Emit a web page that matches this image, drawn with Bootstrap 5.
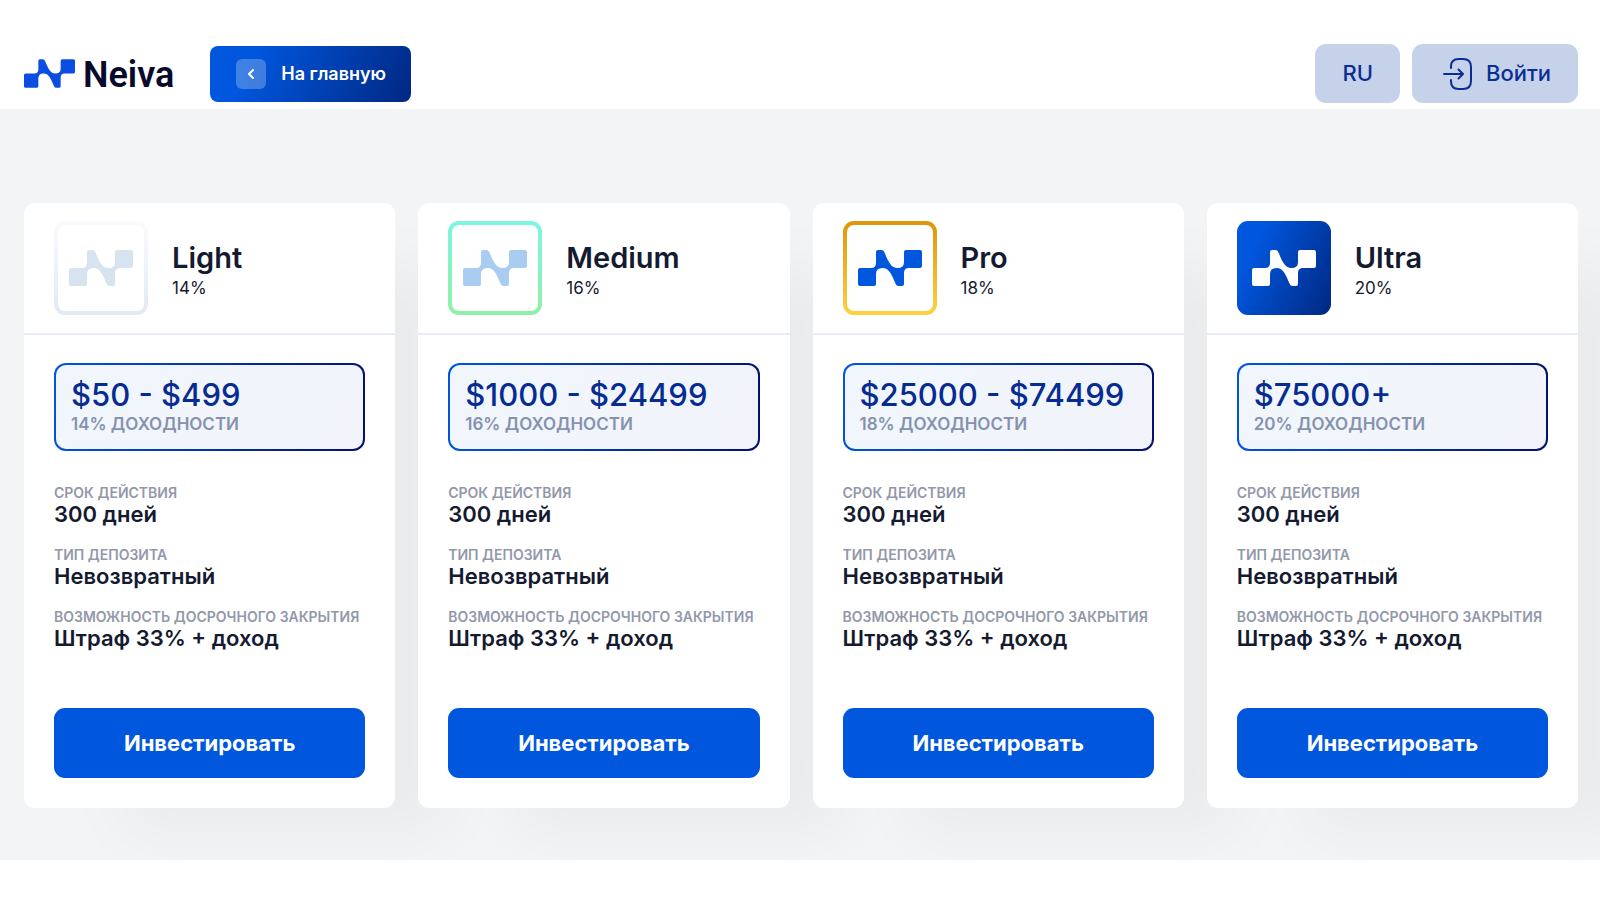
<!DOCTYPE html>
<html lang="ru">
<head>
<meta charset="utf-8">
<meta name="viewport" content="width=device-width, initial-scale=1">
<title>Neiva</title>
<link href="https://cdn.jsdelivr.net/npm/bootstrap@5.3.0/dist/css/bootstrap.min.css" rel="stylesheet">
<style>
:root{--brand:#0057de;--deep:#012a87;--ink:#141a30;--grad:linear-gradient(115deg,#0057de 20%,#012a87 96%)}
body{font-family:Inter,"Liberation Sans",sans-serif;color:var(--ink);background:#fff}
.top-bar{padding:44px 22px 6px 24px}
.brand-link{color:#080a2c;font:600 36px/36px Roboto,sans-serif;gap:8px;margin-right:36px}
.brand-link span{padding-top:2px}
.brand-link svg{width:51px;height:29px;color:#0b4de0}
.btn-home{height:56px;padding:0 25px 0 26px;gap:15px;border:0;border-radius:8px;background:var(--grad);color:#fff;font-size:18px;font-weight:600}
.btn-home:hover{color:#fff}
.home-chip{width:30px;height:30px;border-radius:6px;background:rgba(255,255,255,.25)}
.top-actions{gap:12px}
.btn-soft{height:59px;border:0;border-radius:11px;background:#c5d2ea;color:#0a2f94;font-size:22px;font-weight:500;padding:0 27px}
.btn-login{padding:0 27px 0 30px;gap:12px}
.plans{background:#f3f4f6;padding:94px 22px 52px 24px;overflow:hidden}
.plan-row{--bs-gutter-x:23px;--bs-gutter-y:23px}
.plan{border:0;border-radius:11px;box-shadow:76px 44px 60px -20px rgba(0,0,0,.04)}
.plan-head{padding:18px 30px;gap:24px;border-bottom:2px solid #e8ecf8}
.plan-icon{width:94px;height:94px;border-radius:11px;border:4px solid transparent}
.plan-icon svg{width:64px;height:36px}
.tier-light{color:#d7e3ef;background:linear-gradient(#fff,#fff) padding-box,linear-gradient(#fafbfe,#e2e9f5) border-box}
.tier-medium{color:#a9cdf0;background:linear-gradient(#fff,#fff) padding-box,linear-gradient(#7df5e2,#8ff0a6) border-box}
.tier-pro{color:var(--brand);background:linear-gradient(#fff,#fff) padding-box,linear-gradient(#df950c,#fbd243) border-box}
.tier-ultra{color:#fff;background:var(--grad) border-box}
.plan-title{padding-top:4px}
.plan-name{font-size:29px;line-height:36px;font-weight:600}
.plan-rate{font-size:17px;line-height:24px}
.plan-body{padding:28px 30px 30px}
.range-box{height:88px;padding:0 15px;border:2px solid transparent;border-radius:12px;background:linear-gradient(115deg,#f1f6fd,#f2f3fa) padding-box,linear-gradient(100deg,#0057de,#03106f) border-box}
.range-sum{font-size:31px;line-height:34px;font-weight:500;color:#062c92}
.range-note{font-size:17px;line-height:24px;font-weight:600;color:#8592ae}
.facts{margin:33px 0 58px;gap:20px}
.facts dt{font-size:14px;line-height:18px;font-weight:600;color:#9298aa;white-space:nowrap}
.facts dd{font-size:22px;line-height:24px;font-weight:600}
.btn-invest{height:70px;border:0;border-radius:11px;background:var(--brand);color:#fff;font-size:22px;font-weight:700}
.btn-invest:hover{background:var(--deep);color:#fff}
</style>
</head>
<body>
<svg class="d-none" aria-hidden="true">
<symbol id="mark-n" viewBox="0 0 64 36"><path fill="currentColor" d="M2 18H13Q18 18 18 13V2Q18 0 20 0H23.500Q25.500 0 26.300 2C30.500 12 33 18 39.500 18Q46 18 46 12V2Q46 0 48 0H62Q64 0 64 2V16Q64 18 62 18H51Q46 18 46 23V34Q46 36 44 36H40.500Q38.500 36 37.700 34C33.500 24 31 18 24.500 18Q18 18 18 24V34Q18 36 16 36H2Q0 36 0 34V20Q0 18 2 18Z"/></symbol>
</svg>
<header class="top-bar d-flex flex-wrap align-items-center">
  <a class="brand-link d-flex align-items-center text-decoration-none" href="#"><svg aria-hidden="true"><use href="#mark-n"/></svg><span>Neiva</span></a>
  <a class="btn btn-home d-inline-flex align-items-center" href="#">
    <span class="home-chip d-flex align-items-center justify-content-center"><svg width="8" height="12" viewBox="0 0 8 12" fill="none" stroke="#fff" stroke-width="2" stroke-linecap="round" stroke-linejoin="round" aria-hidden="true"><path d="M6 2 2 6l4 4"/></svg></span>
    На главную
  </a>
  <div class="top-actions d-flex ms-auto">
    <button class="btn btn-soft" type="button">RU</button>
    <button class="btn btn-soft btn-login d-inline-flex align-items-center" type="button">
      <svg width="32" height="34" viewBox="0 0 32 34" fill="none" stroke="#0a2f94" stroke-width="2" stroke-linecap="round" stroke-linejoin="round" aria-hidden="true"><path d="M9 11V9.500Q9 2 16.500 2H21Q29 2 29 10V24Q29 32 21 32H16.500Q9 32 9 24.500V23M2 17H21M16.500 12.500 21 17l-4.500 4.500"/></svg>
      Войти
    </button>
  </div>
</header>
<main class="plans">
  <div class="row row-cols-1 row-cols-md-2 row-cols-xl-4 plan-row">
    <div class="col"><article class="card plan">
      <div class="plan-head d-flex align-items-center">
        <div class="plan-icon tier-light d-flex align-items-center justify-content-center"><svg aria-hidden="true"><use href="#mark-n"/></svg></div>
        <div class="plan-title"><h2 class="plan-name m-0">Light</h2><div class="plan-rate">14%</div></div>
      </div>
      <div class="plan-body">
        <div class="range-box d-flex flex-column justify-content-center"><div class="range-sum">$50 - $499</div><div class="range-note">14% ДОХОДНОСТИ</div></div>
        <dl class="facts d-flex flex-column">
          <div><dt>СРОК ДЕЙСТВИЯ</dt><dd class="m-0">300 дней</dd></div>
          <div><dt>ТИП ДЕПОЗИТА</dt><dd class="m-0">Невозвратный</dd></div>
          <div><dt>ВОЗМОЖНОСТЬ ДОСРОЧНОГО ЗАКРЫТИЯ</dt><dd class="m-0">Штраф 33% + доход</dd></div>
        </dl>
        <button class="btn btn-invest w-100" type="button">Инвестировать</button>
      </div>
    </article></div>
    <div class="col"><article class="card plan">
      <div class="plan-head d-flex align-items-center">
        <div class="plan-icon tier-medium d-flex align-items-center justify-content-center"><svg aria-hidden="true"><use href="#mark-n"/></svg></div>
        <div class="plan-title"><h2 class="plan-name m-0">Medium</h2><div class="plan-rate">16%</div></div>
      </div>
      <div class="plan-body">
        <div class="range-box d-flex flex-column justify-content-center"><div class="range-sum">$1000 - $24499</div><div class="range-note">16% ДОХОДНОСТИ</div></div>
        <dl class="facts d-flex flex-column">
          <div><dt>СРОК ДЕЙСТВИЯ</dt><dd class="m-0">300 дней</dd></div>
          <div><dt>ТИП ДЕПОЗИТА</dt><dd class="m-0">Невозвратный</dd></div>
          <div><dt>ВОЗМОЖНОСТЬ ДОСРОЧНОГО ЗАКРЫТИЯ</dt><dd class="m-0">Штраф 33% + доход</dd></div>
        </dl>
        <button class="btn btn-invest w-100" type="button">Инвестировать</button>
      </div>
    </article></div>
    <div class="col"><article class="card plan">
      <div class="plan-head d-flex align-items-center">
        <div class="plan-icon tier-pro d-flex align-items-center justify-content-center"><svg aria-hidden="true"><use href="#mark-n"/></svg></div>
        <div class="plan-title"><h2 class="plan-name m-0">Pro</h2><div class="plan-rate">18%</div></div>
      </div>
      <div class="plan-body">
        <div class="range-box d-flex flex-column justify-content-center"><div class="range-sum">$25000 - $74499</div><div class="range-note">18% ДОХОДНОСТИ</div></div>
        <dl class="facts d-flex flex-column">
          <div><dt>СРОК ДЕЙСТВИЯ</dt><dd class="m-0">300 дней</dd></div>
          <div><dt>ТИП ДЕПОЗИТА</dt><dd class="m-0">Невозвратный</dd></div>
          <div><dt>ВОЗМОЖНОСТЬ ДОСРОЧНОГО ЗАКРЫТИЯ</dt><dd class="m-0">Штраф 33% + доход</dd></div>
        </dl>
        <button class="btn btn-invest w-100" type="button">Инвестировать</button>
      </div>
    </article></div>
    <div class="col"><article class="card plan">
      <div class="plan-head d-flex align-items-center">
        <div class="plan-icon tier-ultra d-flex align-items-center justify-content-center"><svg aria-hidden="true"><use href="#mark-n"/></svg></div>
        <div class="plan-title"><h2 class="plan-name m-0">Ultra</h2><div class="plan-rate">20%</div></div>
      </div>
      <div class="plan-body">
        <div class="range-box d-flex flex-column justify-content-center"><div class="range-sum">$75000+</div><div class="range-note">20% ДОХОДНОСТИ</div></div>
        <dl class="facts d-flex flex-column">
          <div><dt>СРОК ДЕЙСТВИЯ</dt><dd class="m-0">300 дней</dd></div>
          <div><dt>ТИП ДЕПОЗИТА</dt><dd class="m-0">Невозвратный</dd></div>
          <div><dt>ВОЗМОЖНОСТЬ ДОСРОЧНОГО ЗАКРЫТИЯ</dt><dd class="m-0">Штраф 33% + доход</dd></div>
        </dl>
        <button class="btn btn-invest w-100" type="button">Инвестировать</button>
      </div>
    </article></div>
  </div>
</main>
<script src="https://cdn.jsdelivr.net/npm/bootstrap@5.3.0/dist/js/bootstrap.bundle.min.js"></script>
</body>
</html>
